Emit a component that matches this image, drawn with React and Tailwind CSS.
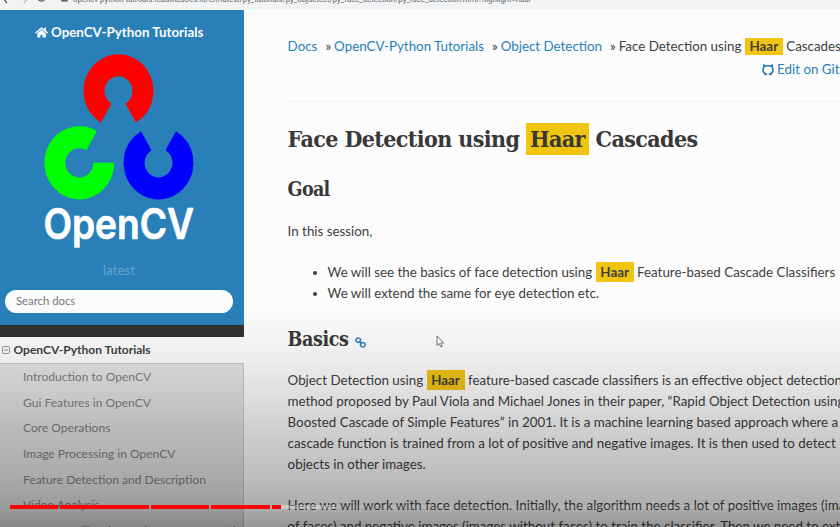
import React from "react";
import { FaHome } from "react-icons/fa";

function Haar({ className = "" }) {
  return (
    <span className={"inline-block bg-[#f1c40f] text-center font-bold " + className}>Haar</span>
  );
}

const RING = "M -17.5 30.31 A 35 35 0 1 1 17.5 30.31 L 7 12.12 A 14 14 0 1 0 -7 12.12 Z";

function Logo() {
  return (
    <svg className="block h-[210px] w-[244px]" viewBox="0 44 244 210">
      <path d={RING} fill="#ff0000" transform="translate(118.5 90.9) scale(1 1.045)" />
      <path d={RING} fill="#00ff00" transform="translate(79.3 162.8) scale(1 1.045) rotate(-120) scale(-1 1)" />
      <path d={RING} fill="#0000ff" transform="translate(158.5 162.8) scale(1 1.045) rotate(180)" />
      <text
        x="43.5"
        y="238.5"
        fill="#fff"
        stroke="#fff"
        strokeWidth="0.7"
        fontSize="42"
        fontWeight="600"
        fontFamily="Inter, sans-serif"
        textLength="150.5"
        lengthAdjust="spacingAndGlyphs"
      >
        OpenCV
      </text>
    </svg>
  );
}

const MENU = [
  "Introduction to OpenCV",
  "Gui Features in OpenCV",
  "Core Operations",
  "Image Processing in OpenCV",
  "Feature Detection and Description",
  "Video Analysis",
  "Camera Calibration and 3D Reconstruction",
];

function Sidebar() {
  return (
    <aside className="flex w-[244px] shrink-0 flex-col bg-[#343131]">
      <div className="h-[315px] shrink-0 bg-[#2980b9]">
        <div className="flex h-[34px] items-center pt-[10px] pl-[35px] text-[13.35px] font-bold text-[#fcfcfc]">
          <FaHome className="mr-[3px] size-[13px]" />
          <span>OpenCV-Python Tutorials</span>
        </div>
        <Logo />
        <div className="mt-[6px] h-[20px] pr-[6px] text-center text-[13.5px] leading-[20px] text-white/30">latest</div>
        <div className="mt-[10px] ml-[5px] flex h-[23px] w-[228px] items-center rounded-full bg-[#fcfcfc] pl-[11px] text-[11.3px] text-[#777]">
          Search docs
        </div>
      </div>
      <div className="h-[12px] shrink-0" />
      <div className="flex h-[26px] shrink-0 items-center bg-[#fcfcfc] pl-[2px] text-[12px] font-bold text-[#404040]">
        <svg className="mr-[3.5px] size-[8px]" viewBox="0 0 8 8" fill="none" stroke="#777" strokeWidth="0.8">
          <rect x="0.5" y="0.5" width="7" height="7" rx="1" />
          <path d="M2 4h4" />
        </svg>
        OpenCV-Python Tutorials
      </div>
      <ul className="w-full grow border-t border-r border-[#c9c9c9] bg-[#e3e3e3] pl-[23px] text-[12.05px] text-[#808080]">
        {MENU.map((item) => (
          <li key={item} className="h-[25.7px] leading-[26px] whitespace-nowrap">
            {item}
          </li>
        ))}
      </ul>
    </aside>
  );
}

function Separator() {
  return <span className="mr-[3px] ml-[8px] text-[#404040]">»</span>;
}

function Content() {
  return (
    <main className="w-[596px] shrink-0 overflow-hidden bg-[#fcfcfc] pl-[43.6px] text-[13.35px] leading-[20.8px] whitespace-nowrap text-[#404040]">
      <div className="mt-[24px] flex h-[24px] items-center text-[#2980b9]">
        <span>Docs</span>
        <Separator />
        <span>OpenCV-Python Tutorials</span>
        <Separator />
        <span>Object Detection</span>
        <Separator />
        <span className="text-[#404040]">
          Face Detection using <Haar className="h-[17px] w-[38px] leading-[17px]" /> Cascades
        </span>
      </div>
      <div className="flex h-[23px] items-center pl-[474px] text-[#2980b9]">
        <svg className="mr-[3.5px] size-[12px] shrink-0" viewBox="0 0 12 12" fill="none" stroke="#2980b9" strokeWidth="1.7">
          <path d="M4.3 11.2V9.3M7.7 11.2V9.3M4.3 10.6C2.2 9.9 1 8.2 1 6.1 1 4.9 1.3 4 1.9 3.2V1.3L3.9 2Q6 1.4 8.1 2L10.1 1.3V3.2C10.7 4 11 4.9 11 6.1 11 8.2 9.8 9.9 7.7 10.6" />
        </svg>
        <span>Edit on GitHub</span>
      </div>
      <hr className="mt-[20px] border-[#f1f2f2]" />
      <h1 className="mt-[19px] h-[36px] font-['Roboto_Slab','DejaVu_Serif_Condensed','DejaVu_Serif',serif] text-[23px] leading-[36px] font-bold tracking-[-0.6px] text-[#383838]">
        Face Detection using <Haar className="h-[32px] w-[63px] leading-[32px]" /> Cascades
      </h1>
      <h2 className="mt-[20px] h-[26px] font-['Roboto_Slab','DejaVu_Serif_Condensed','DejaVu_Serif',serif] text-[19.5px] leading-[26px] font-bold tracking-[-0.7px] text-[#383838]">
        Goal
      </h2>
      <p className="mt-[18px]">In this session,</p>
      <ul className="mt-[20.5px] list-disc pl-[40px]">
        <li>
          We will see the basics of face detection using <Haar className="h-[20px] w-[38px] leading-[20px]" /> Feature-based Cascade Classifiers
        </li>
        <li>We will extend the same for eye detection etc.</li>
      </ul>
      <h2 className="mt-[23px] flex h-[26px] items-center font-['Roboto_Slab','DejaVu_Serif_Condensed','DejaVu_Serif',serif] text-[19.5px] leading-[26px] font-bold tracking-[-0.4px] text-[#383838]">
        Basics
        <svg className="mt-[5px] ml-[7px] size-[11px]" viewBox="0 0 12 12" fill="none" stroke="#2980b9" strokeWidth="1.6">
          <rect x="1" y="1.2" width="5" height="4.6" rx="2" transform="rotate(20 3.5 3.5)" />
          <rect x="6" y="6.2" width="5" height="4.6" rx="2" transform="rotate(20 8.5 8.5)" />
          <path d="M4.5 4.5l3 3" />
        </svg>
      </h2>
      <p className="mt-[17.5px]">
        Object Detection using <Haar className="h-[20px] w-[38px] leading-[20px]" /> feature-based cascade classifiers is an effective object detection
        <br />
        method proposed by Paul Viola and Michael Jones in their paper, “Rapid Object Detection using a
        <br />
        Boosted Cascade of Simple Features” in 2001. It is a machine learning based approach where a
        <br />
        cascade function is trained from a lot of positive and negative images. It is then used to detect
        <br />
        objects in other images.
      </p>
      <p className="mt-[20.8px]">
        Here we will work with face detection. Initially, the algorithm needs a lot of positive images (images
        <br />
        of faces) and negative images (images without faces) to train the classifier. Then we need to extract
      </p>
    </main>
  );
}

function ProgressBar() {
  return (
    <div className="absolute top-[505px] left-[10px] flex h-[4px] w-[820px] gap-[2px]">
      <div className="w-[48px] bg-[#ff0000]" />
      <div className="w-[89px] bg-[#ff0000]" />
      <div className="w-[58px] bg-[#ff0000]" />
      <div className="w-[59px] bg-[#ff0000]" />
      <div className="flex grow">
        <div className="w-[9px] bg-[#ff0000]" />
        <div className="w-[54px] bg-white/35" />
        <div className="grow bg-white/10" />
      </div>
    </div>
  );
}

export default function App() {
  return (
    <div className="relative flex h-[527px] w-[840px] flex-col overflow-hidden bg-[#fcfcfc] font-[Lato,sans-serif]">
      <header className="flex h-[10px] shrink-0 items-start overflow-hidden border-b border-[#f4f5f7] bg-[#f1f3f4] text-[#5f6368]">
        <svg className="h-[4px] w-[70px] shrink-0" viewBox="0 0 70 4" fill="none" stroke="#5f6368" strokeWidth="1.3">
          <path d="M3 -2l4 5M38 -1a4 4 0 0 0 7 0" />
          <path d="M28 -2l-4 5" stroke="#bbb" />
          <path d="M62 0h5v1h-5z" fill="#5f6368" />
        </svg>
        <span className="-mt-[5px] ml-[3px] font-[Roboto,sans-serif] text-[7.75px] leading-[9px] whitespace-nowrap">
          opencv-python-tutroals.readthedocs.io/en/latest/py_tutorials/py_objdetect/py_face_detection/py_face_detection.html?highlight=haar
        </span>
      </header>
      <div className="flex min-h-0 grow">
        <Sidebar />
        <Content />
      </div>
      <div className="absolute inset-x-0 bottom-0 h-[227px] bg-[linear-gradient(to_bottom,rgba(0,0,0,0)_0%,rgba(0,0,0,0.04)_20%,rgba(0,0,0,0.11)_40%,rgba(0,0,0,0.19)_60%,rgba(0,0,0,0.26)_80%,rgba(0,0,0,0.32)_92%,rgba(0,0,0,0.41)_100%)]" />
      <svg className="absolute top-[335px] left-[436px] h-[13px] w-[9px]" viewBox="0 0 9 13" fill="#f4f4f4" stroke="#666" strokeWidth="0.9">
        <path d="M1 1v9.5l2.2-2 1.6 3.4 1.4-.6-1.5-3.3h3z" />
      </svg>
      <ProgressBar />
    </div>
  );
}
